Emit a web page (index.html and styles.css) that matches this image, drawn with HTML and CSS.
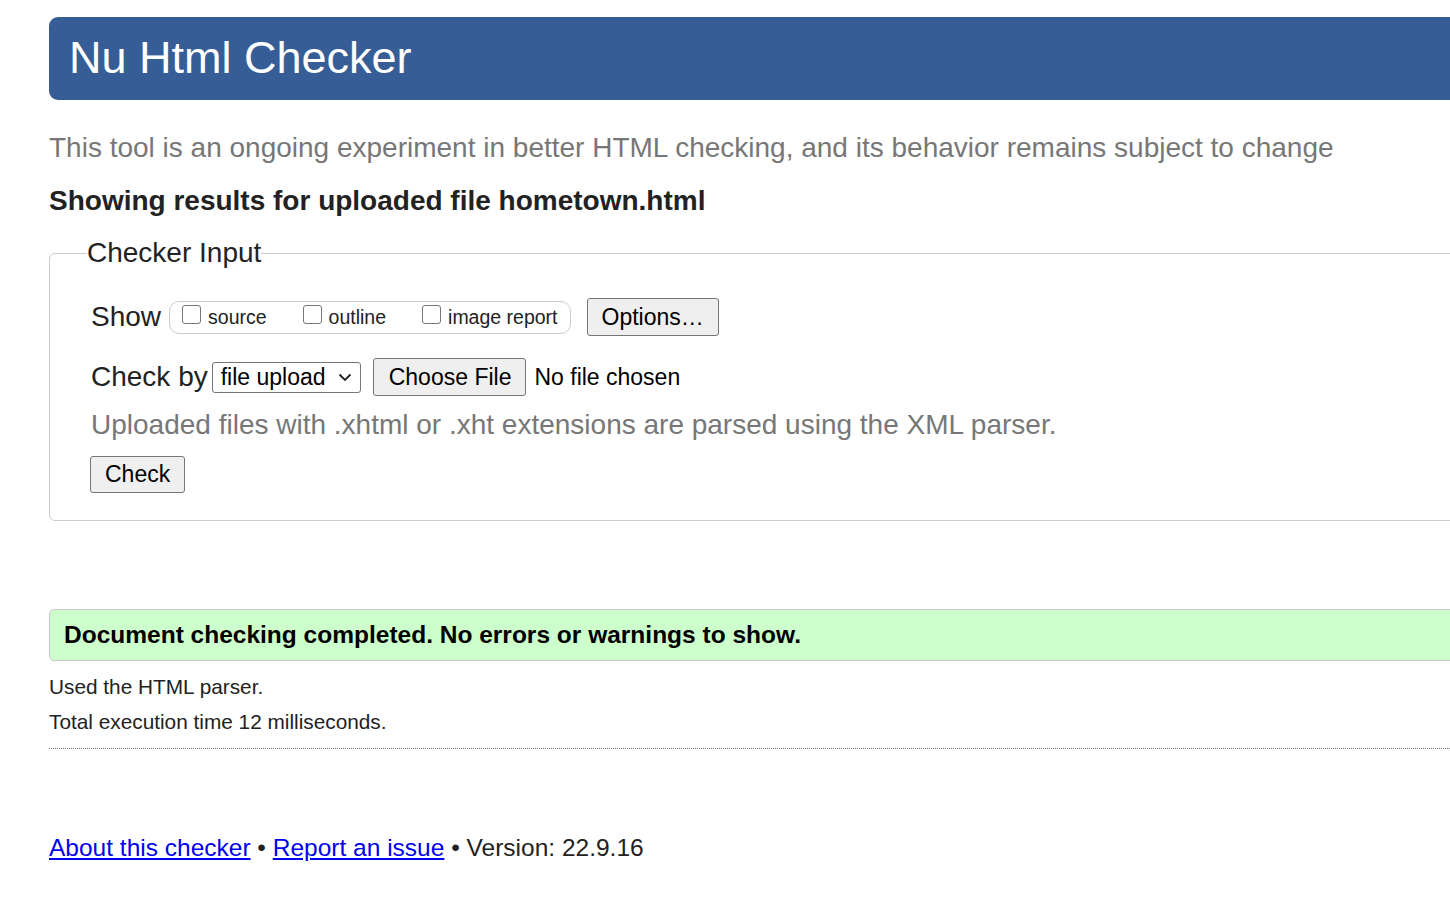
FILE: index.html
```html
<!DOCTYPE html>
<html lang="en">
<head>
<meta charset="utf-8">
<title>Nu Html Checker</title>
<link rel="stylesheet" href="styles.css">
</head>
<body>
<div class="page">
  <header class="banner"><h1>Nu Html Checker</h1></header>
  <p class="intro">This tool is an ongoing experiment in better HTML checking, and its behavior remains subject to change</p>
  <h2 class="results">Showing results for uploaded file hometown.html</h2>
  <fieldset class="input">
    <legend>Checker Input</legend>
    <div class="row show-row">
      <span class="label">Show</span>
      <div class="checkgroup">
        <label class="chk"><span class="box"></span>source</label>
        <label class="chk"><span class="box"></span>outline</label>
        <label class="chk"><span class="box"></span>image report</label>
      </div>
      <span class="btn options">Options…</span>
    </div>
    <div class="row by-row">
      <span class="label">Check by</span>
      <span class="select">file upload<svg width="14" height="9" viewBox="0 0 14 9"><path d="M1.5 1.5 L7 7 L12.5 1.5" fill="none" stroke="#222" stroke-width="1.8"/></svg></span>
      <span class="btn choose">Choose File</span>
      <span class="nofile">No file chosen</span>
    </div>
    <p class="hint">Uploaded files with .xhtml or .xht extensions are parsed using the XML parser.</p>
    <div class="row"><span class="btn check">Check</span></div>
  </fieldset>
  <div class="success">Document checking completed. No errors or warnings to show.</div>
  <p class="meta first">Used the HTML parser.</p>
  <p class="meta">Total execution time 12 milliseconds.</p>
  <hr class="sep">
  <p class="footer"><a href="#">About this checker</a> • <a href="#">Report an issue</a> • Version: 22.9.16</p>
</div>
</body>
</html>
```
FILE: styles.css
```css
html { overflow: hidden; }
body {
  margin: 0;
  font-family: "Liberation Sans", Arial, sans-serif;
  color: #222;
  background: #fff;
}
.page {
  padding-top: 17px;
  margin-left: 49px;
  margin-right: -40px;
}
.banner {
  background: #365d95;
  border-radius: 9px;
  height: 83px;
  display: flex;
  align-items: center;
  padding: 0 0 2px 20px;
  box-sizing: border-box;
}
.banner h1 {
  margin: 0;
  font-size: 45px;
  font-weight: normal;
  color: #fff;
  line-height: 52px;
}
.intro {
  margin: 32px 0 0;
  font-size: 28px;
  line-height: 32px;
  color: #777;
}
.results {
  margin: 21px 0 0;
  font-size: 28px;
  line-height: 32px;
  font-weight: bold;
  color: #222;
}
.input {
  margin: 20px 0 0;
  border: 1px solid #ccc;
  border-radius: 6px;
  padding: 12px 0 27px 37px;
}
.input legend {
  padding: 0;
  font-size: 28px;
  line-height: 32px;
}
.row {
  display: flex;
  align-items: center;
  padding-left: 4px;
}
.label {
  font-size: 28px;
  line-height: 32px;
  margin-right: 8px;
}
.checkgroup {
  display: flex;
  align-items: center;
  gap: 36px;
  border: 1px solid #ccc;
  border-radius: 10px;
  height: 33px;
  box-sizing: border-box;
  padding: 0 12px 0 12px;
}
.chk {
  display: flex;
  align-items: center;
  font-size: 19.5px;
  line-height: 22px;
  gap: 7px;
  color: #222;
}
.box {
  width: 19px;
  height: 19px;
  box-sizing: border-box;
  border: 1.5px solid #767676;
  border-radius: 3px;
  position: relative;
  top: -3px;
}
.btn {
  display: inline-flex;
  align-items: center;
  box-sizing: border-box;
  background: #efefef;
  border: 1px solid #767676;
  border-radius: 3px;
  font-size: 23px;
  color: #000;
  padding: 0 13px;
}
.options { height: 38px; margin-left: 16px; padding: 0 14px; }
.show-row { margin-top: 17px; }
.by-row { margin-top: 22px; }
.select {
  display: inline-flex;
  align-items: center;
  justify-content: space-between;
  box-sizing: border-box;
  width: 149px;
  height: 31px;
  border: 1px solid #767676;
  border-radius: 3px;
  padding: 0 8px 0 8px;
  font-size: 23px;
  color: #000;
  margin-left: -4px;
}
.choose { height: 38px; margin-left: 12px; padding: 0 14px 0 15px; }
.nofile { font-size: 23px; margin-left: 8px; color: #000; }
.hint {
  margin: 13px 0 0;
  padding-left: 4px;
  font-size: 28px;
  line-height: 32px;
  color: #777;
}
.check { height: 37px; margin-top: 15px; padding: 0 14px; margin-left: -1px; }
.success {
  margin-top: 88px;
  background: #ccffcc;
  border: 1px solid #c8c8c8;
  border-radius: 5px;
  height: 52px;
  box-sizing: border-box;
  display: flex;
  align-items: center;
  padding-left: 14px;
  font-size: 24.5px;
  font-weight: bold;
  color: #000;
}
.meta {
  margin: 0;
  font-size: 20.8px;
  line-height: 35px;
}
.meta.first { margin-top: 8px; }
.sep {
  margin: 9px 0 0;
  border: 0;
  border-top: 1px dotted #777;
  height: 0;
}
.footer {
  margin: 83px 0 0;
  font-size: 24.5px;
  line-height: 32px;
}
.footer a { color: #00e; text-decoration: underline; }
```
